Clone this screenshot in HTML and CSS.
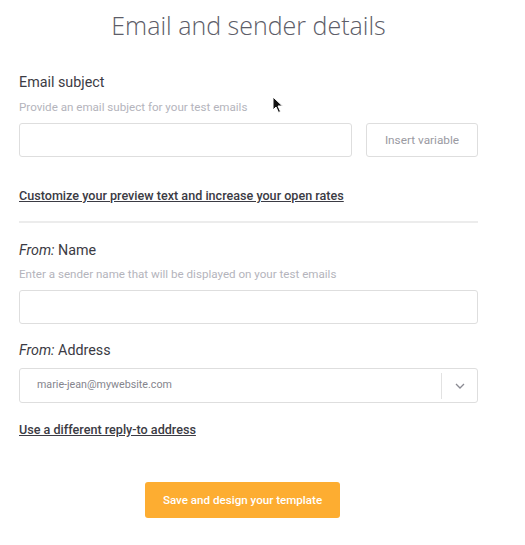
FILE: index.html
```html
<!DOCTYPE html>
<html lang="en">
<head>
    <meta charset="UTF-8">
    <meta name="viewport" content="width=device-width, initial-scale=1.0">
    <title>Email and sender details</title>
    <link rel="stylesheet" href="styles.css">
</head>
<body>

<div class="container">
    <h2 class="title">Email and sender details</h2>

    <div class="field field-subject">
        <label class="label">Email subject</label>
        <p class="hint">Provide an email subject for your test emails</p>
        <div class="subject-row">
            <input type="text" class="text-input" />
            <button class="btn-variable">Insert variable</button>
        </div>
    </div>

    <a href="#" class="link link-preview">Customize your preview text and increase your open rates</a>

    <hr class="divider">

    <div class="field field-name">
        <label class="label"><em>From:</em> Name</label>
        <p class="hint">Enter a sender name that will be displayed on your test emails</p>
        <input type="text" class="text-input" />
    </div>

    <div class="field field-address">
        <label class="label"><em>From:</em> Address</label>
        <div class="select">
            <span class="select-value">marie-jean@mywebsite.com</span>
            <span class="select-arrow">
                <svg width="10" height="6" viewBox="0 0 10 6"><path d="M1 1l4 4 4-4" fill="none" stroke="#8a8a92" stroke-width="1.3"/></svg>
            </span>
        </div>
    </div>

    <a href="#" class="link link-reply">Use a different reply-to address</a>

    <div class="actions">
        <button class="btn-save">Save and design your template</button>
    </div>
</div>

<svg class="cursor" width="12" height="18" viewBox="0 0 12 18">
    <path d="M1 1v13l3-3 2.5 5.5 2-1L6 10h4.5z" fill="#111" stroke="#fff" stroke-width="1"/>
</svg>

</body>
</html>
```

FILE: styles.css
```css
* {
    box-sizing: border-box;
    margin: 0;
    padding: 0;
}
body {
    font-family: Roboto, "Liberation Sans", sans-serif;
    background: #fff;
    color: #3b3b44;
    width: 525px;
    height: 545px;
    overflow: hidden;
    position: relative;
}
.container {
    width: 459px;
    margin-left: 19px;
    padding-top: 8px;
}
.title {
    font-family: "Open Sans", sans-serif;
    font-weight: 300;
    font-size: 25px;
    line-height: 34px;
    color: #5d5d68;
    text-align: center;
}
.field {
    display: flex;
    flex-direction: column;
}
.field-subject {
    margin-top: 31px;
}
.label {
    font-size: 14.3px;
    line-height: 18px;
}
.label em {
    font-style: italic;
}
.hint {
    font-size: 11.6px;
    line-height: 14px;
    color: #b4b4bc;
    margin-top: 9px;
    margin-bottom: 9px;
}
.field-name .hint {
    margin-top: 8px;
}
.subject-row {
    display: flex;
    gap: 14px;
}
.text-input {
    height: 34px;
    width: 100%;
    border: 1px solid #dedede;
    border-radius: 3px;
    outline: none;
}
.subject-row .text-input {
    flex: 1;
}
.btn-variable {
    width: 112px;
    height: 34px;
    background: #fff;
    border: 1px solid #dedede;
    border-radius: 3px;
    font-family: Roboto, sans-serif;
    font-size: 11.8px;
    color: #9a9aa2;
}
.link {
    display: block;
    font-size: 12.6px;
    font-weight: 500;
    color: #3b3b44;
    text-decoration: underline;
    line-height: 16px;
}
.link-preview {
    margin-top: 31px;
}
.divider {
    border: none;
    border-top: 2px solid #ececec;
    margin-top: 17px;
}
.divider + .field {
    margin-top: 18px;
}
.field-address {
    margin-top: 17px;
}
.field-address .label {
    margin-bottom: 9px;
}
.select {
    height: 35px;
    border: 1px solid #dedede;
    border-radius: 3px;
    display: flex;
    align-items: center;
}
.select-value {
    flex: 1;
    padding-left: 17px;
    font-size: 10.7px;
    color: #85858d;
    margin-top: -2px;
}
.select-arrow {
    width: 36px;
    height: 26px;
    border-left: 1px solid #e2e2e2;
    display: flex;
    align-items: center;
    justify-content: center;
}
.link-reply {
    margin-top: 19px;
}
.actions {
    display: flex;
    justify-content: center;
    margin-top: 44px;
    padding-right: 12px;
}
.btn-save {
    width: 195px;
    height: 36px;
    background: #fdad31;
    border: none;
    border-radius: 3px;
    color: #fff;
    font-family: Roboto, sans-serif;
    font-size: 11.6px;
    font-weight: 500;
}
.cursor {
    position: absolute;
    left: 272px;
    top: 96px;
}
```
